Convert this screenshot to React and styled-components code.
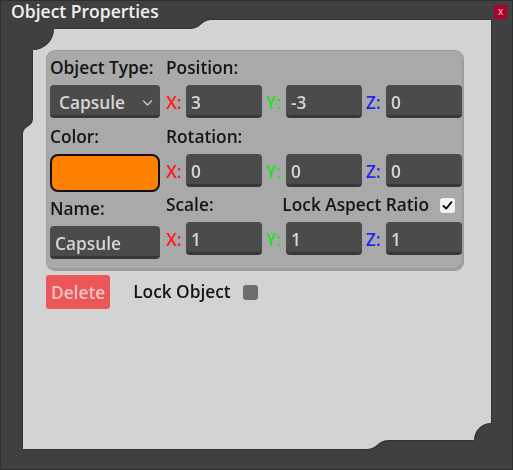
import styled, { createGlobalStyle } from "styled-components";

const GlobalStyle = createGlobalStyle`
  html, body {
    margin: 0;
    padding: 0;
    background: #404040;
  }
  body {
    font-family: "Open Sans", "Noto Sans", sans-serif;
    font-weight: 600;
  }
  * {
    box-sizing: border-box;
  }
`;

const Window = styled.div`
  width: 513px;
  height: 470px;
  background: #404040;
  box-shadow: inset 0 0 0 1px #2f2f2f;
  display: flex;
  flex-direction: column;
`;

const TitleBar = styled.div`
  height: 20px;
  padding: 0 6px 0 11px;
  display: flex;
  justify-content: space-between;
  align-items: flex-start;
`;

const Title = styled.div`
  color: #f0f0f0;
  font-size: 17.5px;
  line-height: 20px;
  margin-top: 1px;
  white-space: nowrap;
`;

const CloseButton = styled.div`
  width: 13px;
  height: 14px;
  margin-top: 5px;
  background: #b0002c;
  color: #f4d8dc;
  font-size: 10px;
  line-height: 13px;
  text-align: center;
  font-weight: 400;
`;

const FrameShadow = styled.div`
  margin: 0 22px 0 23px;
  filter: drop-shadow(0 0 1px rgba(0, 0, 0, 0.55));
`;

// the light body of the window with its notched corners
const Panel = styled.div`
  height: 429px;
  background: #d3d3d3;
  clip-path: path(
    "M 189 0 L 468 0 L 468 403 A 17 17 0 0 0 451 420 L 365 420 C 355 420 354 429 344 429 L 0 429 L 0 115 C 0 105 10 108 10 98 L 10 30 A 21 21 0 0 0 31 9 L 167 9 C 178 9 178 0 189 0 Z"
  );
  padding: 31px 0 0 24px;
`;

const Group = styled.div`
  width: 416px;
  background: #a9a9a9;
  border-radius: 8px;
  box-shadow: inset -1px -2px 0 #9c9c9c, 0 0 0 1px #9f9f9f;
  padding: 6px 3px 11px 3px;
  display: flex;
  gap: 6px;
`;

const Column = styled.div`
  width: ${(p) => p.$width}px;
  display: flex;
  flex-direction: column;
`;

const Label = styled.div`
  font-size: 17.3px;
  line-height: 22px;
  color: #151515;
  margin-bottom: 6px;
  white-space: nowrap;
`;

const LabelRow = styled.div`
  display: flex;
  justify-content: space-between;
  align-items: center;
  padding-right: 5px;
  margin-bottom: 6px;
  ${Label} {
    margin-bottom: 0;
  }
`;

const CheckGroup = styled.div`
  display: flex;
  align-items: center;
  gap: 11px;
`;

const CheckBox = styled.div`
  width: 15px;
  height: 15px;
  border-radius: 3px;
  background: ${(p) => (p.$checked ? "#f2f2f2" : "#6e6e6e")};
  display: flex;
  align-items: center;
  justify-content: center;
`;

const Field = styled.div`
  height: 33px;
  background: #4b4b4b;
  border-bottom: 3px solid #383838;
  border-radius: 4px;
  padding: 7px 5px 1px;
  font-size: 17.3px;
  line-height: 22px;
  color: #d6d6d6;
  margin-bottom: ${(p) => p.$gap ?? 8}px;
  white-space: nowrap;
`;

const SelectBox = styled(Field)`
  padding-left: 9px;
  padding-right: 7px;
  display: flex;
  justify-content: space-between;
`;

const Swatch = styled.div`
  height: 38px;
  background: #ff8000;
  border: 2px solid #111;
  border-radius: 8px;
  margin-bottom: 6px;
`;

const AxisRow = styled.div`
  display: grid;
  grid-template-columns: repeat(3, 96px);
  column-gap: 4px;
  margin-bottom: ${(p) => p.$gap ?? 8}px;
`;

const Axis = styled.div`
  display: flex;
  align-items: flex-start;
`;

const AxisLabel = styled.div`
  width: 20px;
  padding-top: 7px;
  font-size: 17.3px;
  line-height: 22px;
  color: ${(p) => p.$color};
`;

const AxisInput = styled(Field)`
  flex: 1;
  margin-bottom: 0;
`;

const Footer = styled.div`
  display: flex;
  align-items: center;
  margin: 5px 0 0 -1px;
`;

const DeleteButton = styled.div`
  height: 34px;
  padding: 7px 5px 0;
  background: #ec5656;
  border-radius: 3px;
  color: #f3c4c4;
  font-size: 17.3px;
  line-height: 22px;
  margin-right: 23px;
`;

const FooterLabel = styled(Label)`
  margin: 0 12px 0 0;
`;

const axisColors = { X: "#ff1a1a", Y: "#1fe51f", Z: "#2323f0" };

function Vector({ values, gap }) {
  return (
    <AxisRow $gap={gap}>
      {["X", "Y", "Z"].map((axis, i) => (
        <Axis key={axis}>
          <AxisLabel $color={axisColors[axis]}>{axis}:</AxisLabel>
          <AxisInput>{values[i]}</AxisInput>
        </Axis>
      ))}
    </AxisRow>
  );
}

function Chevron() {
  return (
    <svg width="11" height="22" viewBox="0 0 11 22">
      <polyline
        points="1.5,9 5.5,13 9.5,9"
        fill="none"
        stroke="#c8c8c8"
        strokeWidth="1.4"
        strokeLinecap="round"
        strokeLinejoin="round"
      />
    </svg>
  );
}

function Check() {
  return (
    <svg width="11" height="11" viewBox="0 0 11 11">
      <polyline
        points="1.5,6 4.2,8.6 9.5,2.2"
        fill="none"
        stroke="#111"
        strokeWidth="1.9"
        strokeLinecap="round"
        strokeLinejoin="round"
      />
    </svg>
  );
}

export default function App() {
  return (
    <>
      <GlobalStyle />
      <Window>
        <TitleBar>
          <Title>Object Properties</Title>
          <CloseButton>x</CloseButton>
        </TitleBar>
        <FrameShadow>
          <Panel>
            <Group>
              <Column $width={110}>
                <Label>Object Type:</Label>
                <SelectBox>
                  <span>Capsule</span>
                  <Chevron />
                </SelectBox>
                <Label>Color:</Label>
                <Swatch />
                <Label>Name:</Label>
                <Field $gap={0}>Capsule</Field>
              </Column>
              <Column $width={294}>
                <Label>Position:</Label>
                <Vector values={["3", "-3", "0"]} />
                <Label>Rotation:</Label>
                <Vector values={["0", "0", "0"]} gap={7} />
                <LabelRow>
                  <Label>Scale:</Label>
                  <CheckGroup>
                    <Label>Lock Aspect Ratio</Label>
                    <CheckBox $checked>
                      <Check />
                    </CheckBox>
                  </CheckGroup>
                </LabelRow>
                <Vector values={["1", "1", "1"]} gap={0} />
              </Column>
            </Group>
            <Footer>
              <DeleteButton>Delete</DeleteButton>
              <FooterLabel>Lock Object</FooterLabel>
              <CheckBox />
            </Footer>
          </Panel>
        </FrameShadow>
      </Window>
    </>
  );
}
